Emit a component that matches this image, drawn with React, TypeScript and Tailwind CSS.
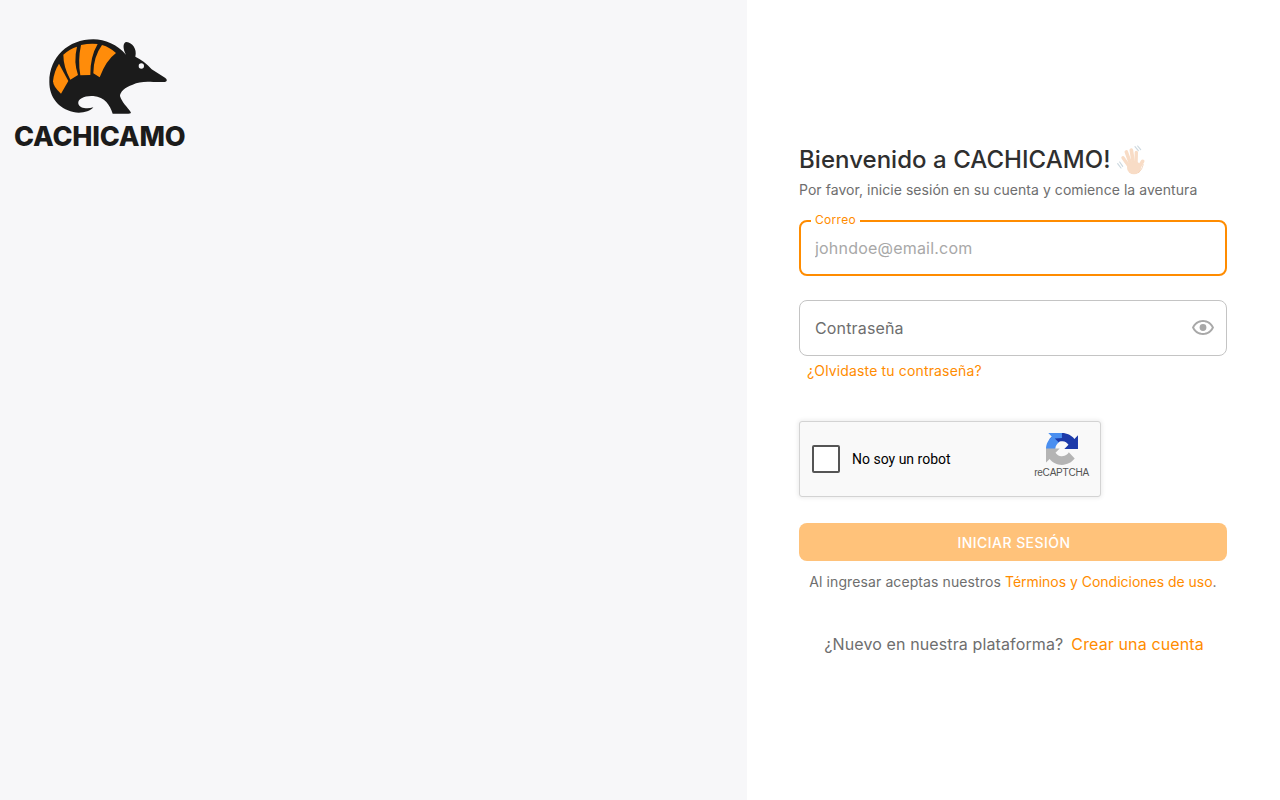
const Logo = () => (
  <div className="flex w-[171px] flex-col">
    <svg viewBox="0 0 405 270" className="ml-[26px] h-[90px] w-[135px]">
      <path
        fill="#1b1b1b"
        d="M28 150C28 75 85 22 160 22C195 22 232 38 258 68C248 50 248 30 260 30C276 32 292 50 286 74C302 82 320 94 335 112L375 137Q386 145 375 150L340 150C315 148 295 150 278 158C255 165 240 180 240 192C245 210 262 225 272 240Q275 245 265 245L218 245C210 220 195 195 160 192C135 190 112 200 115 215C118 228 140 232 160 226C150 240 120 245 100 240C55 230 28 195 28 150Z"
      />
      <path fill="#ff8c0a" d="M57 95L85 147L63 185Q40 165 39 148Q42 118 57 95Z" />
      <path fill="#ff8c0a" d="M70 68Q90 50 111 44Q100 90 114 129L91 143Q70 105 70 68Z" />
      <path fill="#ff8c0a" d="M123 39Q150 33 173 36Q150 75 151 129L121 130Q113 85 123 39Z" />
      <path fill="#ff8c0a" d="M186 39Q210 46 228 63Q198 85 179 136L160 124Q160 75 186 39Z" />
      <circle cx="304" cy="102" r="8" fill="#f7f7f9" />
    </svg>
    <span className="text-center text-[27px] leading-[30px] font-extrabold tracking-[-0.2px] whitespace-nowrap text-[#1b1b1b]">
      CACHICAMO
    </span>
  </div>
);

const WaveHand = () => (
  <svg viewBox="0 0 102 96" className="ml-[4px] h-[32px] w-[34px]" strokeLinecap="round" fill="none">
    <g stroke="#ccd8df" strokeWidth="3.5">
      <path d="M63 8L73 20M71 6L80 17M11 59L21 72M17 54L26 67" />
    </g>
    <g stroke="#f8dcc6">
      <path strokeWidth="10" d="M46 68L27 41" />
      <path strokeWidth="11" d="M50 60L37 24" />
      <path strokeWidth="11" d="M58 58L52 18" />
      <path strokeWidth="10" d="M66 60L67 25" />
      <path strokeWidth="11" d="M70 78L86 52" />
    </g>
    <ellipse cx="60" cy="71" rx="21" ry="20" fill="#f8dcc6" />
    <path stroke="#eec5a6" strokeWidth="2" d="M74 86Q84 78 88 62" />
  </svg>
);

const RecaptchaLogo = () => (
  <svg viewBox="0 0 64 64" className="h-[32px] w-[32px]">
    <path fill="#1c3aa9" d="M64 31.955l-.033-1.37V4.687l-7.16 7.16C50.948 4.674 42.033.093 32.05.093c-10.4 0-19.622 4.96-25.458 12.64l11.736 11.86c1.15-2.127 2.784-3.954 4.768-5.33 2.05-1.598 4.95-2.906 8.955-2.906.484 0 .858.057 1.133.163 4.96.392 9.26 3.13 11.795 7.1l-8.306 8.306c10.52-.04 22.4-.066 27.4.024" />
    <path fill="#4a8ff0" d="M31.862.094l-1.37.033H4.594l7.16 7.16C4.58 13.147 0 22.06 0 32.046c0 .046 0 .1 0 .16l18.55-.16c0-.484.057-.858.163-1.133.392-4.96 3.13-9.26 7.1-11.795l-8.306-8.306 14.355-.8z" />
    <path fill="#b4b4b4" d="M.001 31.955l.033 1.37v25.9l7.16-7.16c5.86 7.173 14.774 11.754 24.76 11.754 10.4 0 19.622-4.96 25.458-12.64L45.676 38.32c-1.15 2.127-2.784 3.954-4.768 5.33-2.05 1.598-4.95 2.906-8.955 2.906-.484 0-.858-.057-1.133-.163-4.96-.392-9.26-3.13-11.795-7.1l8.306-8.306c-10.52.04-22.4-.066-27.4-.024" />
  </svg>
);

export default function App() {
  return (
    <div className="flex h-[800px] w-[1280px] bg-white font-['Inter',sans-serif]">
      <div className="w-[747px] bg-[#f7f7f9] pt-[32px] pl-[14px]">
        <Logo />
      </div>

      <div className="flex flex-1 flex-col justify-center pr-[53px] pl-[52px]">
        <div className="flex h-[32px] items-center">
          <h1 className="text-[24px] leading-[32px] font-[450] tracking-[0.04px] text-[#2f2f2f]">Bienvenido a CACHICAMO!</h1>
          <WaveHand />
        </div>
        <p className="mt-[4px] text-[14px] leading-[20px] tracking-[0.05px] text-[#6e6e6e]">
          Por favor, inicie sesión en su cuenta y comience la aventura
        </p>

        <div className="relative mt-[20px]">
          <span className="absolute top-[-8px] left-[12px] bg-white px-[4px] text-[12px] leading-[16px] tracking-[0.3px] text-[#ff8c00]">
            Correo
          </span>
          <input
            placeholder="johndoe@email.com"
            className="block h-[56px] w-full rounded-[8px] border-2 border-[#ff8c00] bg-white px-[14px] text-[16px] tracking-[0.2px] outline-none placeholder:text-[#a8a8a8]"
          />
        </div>

        <div className="relative mt-[24px]">
          <input
            placeholder="Contraseña"
            className="block h-[56px] w-full rounded-[8px] border border-[#c4c4c4] bg-white px-[15px] text-[16px] tracking-[0.15px] outline-none placeholder:text-[#6e6e6e]"
          />
          <svg viewBox="0 0 24 24" className="absolute top-[16px] right-[12px] h-[24px] w-[24px] fill-[#a8a8a8]">
            <path d="M12 6c3.79 0 7.17 2.13 8.82 5.5C19.17 14.87 15.79 17 12 17s-7.17-2.13-8.82-5.5C4.83 8.13 8.21 6 12 6m0-2C7 4 2.73 7.11 1 11.5 2.73 15.89 7 19 12 19s9.27-3.11 11-7.5C21.27 7.11 17 4 12 4z" />
            <circle cx="12" cy="11.5" r="3.4" />
          </svg>
        </div>

        <a className="mt-[5px] ml-[8px] text-[14px] leading-[20px] tracking-[0.15px] text-[#ff8c00]">¿Olvidaste tu contraseña?</a>

        <div className="mt-[40px] flex h-[76px] w-[302px] items-center rounded-[3px] border border-[#d3d3d3] bg-[#f9f9f9] pr-[11px] pl-[12px] shadow-[0_0_4px_1px_rgba(0,0,0,0.08)]">
          <div className="h-[28px] w-[28px] rounded-[2px] border-2 border-[#555555] bg-white" />
          <span className="ml-[12px] font-['Roboto',sans-serif] text-[14px] text-black">No soy un robot</span>
          <div className="mb-[6px] ml-auto flex flex-col items-center">
            <RecaptchaLogo />
            <span className="mt-[2px] font-['Liberation_Sans',sans-serif] text-[10px] leading-[12px] tracking-[-0.2px] text-[#555555]">reCAPTCHA</span>
          </div>
        </div>

        <button className="mt-[26px] h-[38px] w-full rounded-[8px] bg-[#ffc27a] pl-[2px] text-[14px] font-medium tracking-[0.45px] text-white">
          INICIAR SESIÓN
        </button>

        <p className="mt-[11px] text-center text-[14px] leading-[20px] tracking-[0.1px] text-[#6e6e6e]">
          Al ingresar aceptas nuestros <a className="tracking-[-0.02px] text-[#ff8c00]">Términos y Condiciones de uso</a>.
        </p>

        <div className="mt-[40px] flex justify-center gap-[8px] pl-[2px] text-[16px] leading-[24px] tracking-[0.12px]">
          <span className="text-[#6e6e6e]">¿Nuevo en nuestra plataforma?</span>
          <a className="text-[#ff8c00]">Crear una cuenta</a>
        </div>
      </div>
    </div>
  );
}
